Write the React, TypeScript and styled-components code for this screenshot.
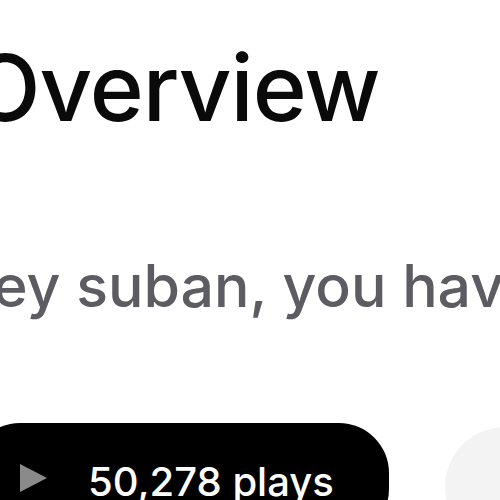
import * as React from 'react';
import styled, { createGlobalStyle } from 'styled-components';

const GlobalStyle = createGlobalStyle`
  html, body {
    margin: 0;
    padding: 0;
    background: #ffffff;
    overflow: hidden;
  }
  #root {
    width: 500px;
    height: 500px;
    overflow: hidden;
  }
`;

const Page = styled.div`
  width: 500px;
  height: 500px;
  overflow: hidden;
  background: #fff;
  font-family: Inter, "Noto Sans", sans-serif;
`;

const Content = styled.div`
  margin-left: -30px;
  padding-top: 38px;
  display: flex;
  flex-direction: column;
`;

const Title = styled.h1`
  margin: 0;
  font-size: 92px;
  font-weight: 500;
  line-height: 100px;
  color: #0a0a0a;
  letter-spacing: -1px;
  white-space: nowrap;
`;

const Greeting = styled.p`
  margin: 116px 0 0 -21px;
  font-size: 59px;
  font-weight: 500;
  line-height: 64px;
  color: #5c5c62;
  white-space: nowrap;
`;

const Row = styled.div`
  margin-top: 105px;
  display: flex;
  align-items: flex-start;
  gap: 56px;
`;

const Pill = styled.div`
  display: flex;
  align-items: center;
  gap: 41px;
  height: 116px;
  padding: 0 55px 0 50px;
  background: #000;
  border-radius: 50px;
  color: #fff;
  font-size: 40px;
  font-weight: 500;
  white-space: nowrap;
`;

const PlayIcon = styled.svg`
  width: 27px;
  height: 28px;
  flex: none;
  margin-top: -6px;
`;

const Circle = styled.div`
  width: 120px;
  height: 120px;
  margin-top: 4px;
  border-radius: 50%;
  background: #f3f3f3;
  flex: none;
`;

export default function App() {
  return (
    <Page>
      <GlobalStyle />
      <Content>
        <Title>Overview</Title>
        <Greeting>Hey suban, you have</Greeting>
        <Row>
          <Pill>
            <PlayIcon viewBox="0 0 27 28">
              <path d="M0 0 L27 14 L0 28 Z" fill="#8a8a8a" />
            </PlayIcon>
            <span>50,278 plays</span>
          </Pill>
          <Circle />
        </Row>
      </Content>
    </Page>
  );
}
